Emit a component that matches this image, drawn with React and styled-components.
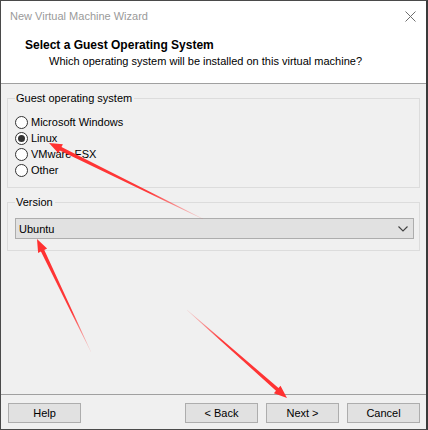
import { createGlobalStyle, styled } from "styled-components"

const GlobalStyle = createGlobalStyle`
    html, body {
        margin: 0;
        padding: 0;
        background: #2b2b2b;
    }
    * { box-sizing: border-box; }
`

const arrows = [
    { id: 'a1', tail: [203, 219], tip: [49, 143] },
    { id: 'a2', tail: [91, 352], tip: [37, 239] },
    { id: 'a3', tail: [187, 310], tip: [287, 398] },
]

function arrowPoints({ tail, tip }) {
    const dx = tip[0] - tail[0]
    const dy = tip[1] - tail[1]
    const len = Math.hypot(dx, dy)
    const ux = dx / len, uy = dy / len
    const nx = -uy, ny = ux
    const head = 13, headW = 5, shaftW = 1.9, tailW = 0.2
    const bx = tip[0] - ux * head, by = tip[1] - uy * head
    const p = (x, y) => `${x.toFixed(1)},${y.toFixed(1)}`
    return [
        p(tail[0] + nx * tailW, tail[1] + ny * tailW),
        p(bx + nx * shaftW, by + ny * shaftW),
        p(bx + nx * headW, by + ny * headW),
        p(tip[0], tip[1]),
        p(bx - nx * headW, by - ny * headW),
        p(bx - nx * shaftW, by - ny * shaftW),
        p(tail[0] - nx * tailW, tail[1] - ny * tailW),
    ].join(' ')
}

const osList = ['Microsoft Windows', 'Linux', 'VMware ESX', 'Other']

export default function App() {
    return (<>
        <GlobalStyle />
        <Styled.Window>
            <Styled.Top>
                <Styled.TitleBar>
                    <Styled.Title>New Virtual Machine Wizard</Styled.Title>
                    <Styled.Close aria-label="close">
                        <svg width="11" height="11" viewBox="0 0 11 11">
                            <path d="M0.5 0.5 L10.5 10.5 M10.5 0.5 L0.5 10.5" stroke="#6d6d6d" strokeWidth="1" fill="none" />
                        </svg>
                    </Styled.Close>
                </Styled.TitleBar>
                <Styled.Heading>Select a Guest Operating System</Styled.Heading>
                <Styled.Sub>Which operating system will be installed on this virtual machine?</Styled.Sub>
            </Styled.Top>

            <Styled.Body>
                <Styled.Group>
                    <Styled.Legend>Guest operating system</Styled.Legend>
                    <Styled.RadioList>
                        {osList.map((os) => (
                            <Styled.RadioRow key={os}>
                                <Styled.Radio $checked={os === 'Linux'} />
                                {os}
                            </Styled.RadioRow>
                        ))}
                    </Styled.RadioList>
                </Styled.Group>

                <Styled.Group $second>
                    <Styled.Legend>Version</Styled.Legend>
                    <Styled.Select>
                        <span>Ubuntu</span>
                        <svg width="10" height="6" viewBox="0 0 10 6">
                            <path d="M0.5 0.5 L5 5 L9.5 0.5" stroke="#404040" strokeWidth="1.1" fill="none" />
                        </svg>
                    </Styled.Select>
                </Styled.Group>
            </Styled.Body>

            <Styled.Footer>
                <Styled.Button>Help</Styled.Button>
                <Styled.Spacer />
                <Styled.Button>&lt; Back</Styled.Button>
                <Styled.Button>Next &gt;</Styled.Button>
                <Styled.Button>Cancel</Styled.Button>
            </Styled.Footer>

            <Styled.Overlay width="428" height="430" viewBox="0 0 428 430">
                <defs>
                    {arrows.map((a) => (
                        <linearGradient key={a.id} id={a.id} gradientUnits="userSpaceOnUse"
                            x1={a.tail[0]} y1={a.tail[1]} x2={a.tip[0]} y2={a.tip[1]}>
                            <stop offset="0" stopColor="#ff3030" stopOpacity="0.1" />
                            <stop offset="0.35" stopColor="#ff3030" stopOpacity="0.95" />
                            <stop offset="1" stopColor="#ff3030" stopOpacity="1" />
                        </linearGradient>
                    ))}
                </defs>
                {arrows.map((a) => (
                    <polygon key={a.id} points={arrowPoints(a)} fill={`url(#${a.id})`} />
                ))}
            </Styled.Overlay>
        </Styled.Window>
    </>)
}

const Styled = {
    Window: styled.div`
        position: relative;
        width: 428px;
        height: 430px;
        display: flex;
        flex-direction: column;
        background: #f0f0f0;
        border: 1px solid #4a4a4a;
        border-right: 2px solid #3a3a3a;
        font-family: "Liberation Sans", Arial, sans-serif;
        font-size: 11px;
        color: #000;
        overflow: hidden;
    `,
    Top: styled.div`
        height: 83px;
        background: #fff;
        border-bottom: 1px solid #a0a0a0;
        display: flex;
        flex-direction: column;
    `,
    TitleBar: styled.div`
        height: 30px;
        display: flex;
        align-items: center;
        justify-content: space-between;
        padding: 0 10px 0 9px;
    `,
    Title: styled.div`
        font-size: 11px;
        color: #9a9a9a;
    `,
    Close: styled.div`
        display: flex;
        align-items: center;
    `,
    Heading: styled.div`
        margin-top: 6px;
        padding-left: 24px;
        font-size: 12px;
        font-weight: bold;
        line-height: 16px;
    `,
    Sub: styled.div`
        padding-left: 48px;
        line-height: 16px;
    `,
    Body: styled.div`
        flex: 1;
        padding: 6px 6px 0 6px;
        display: flex;
        flex-direction: column;
        gap: 6px;
    `,
    Group: styled.fieldset`
        margin: 0;
        border: 1px solid #dcdcdc;
        padding: 8px 5px ${(p) => (p.$second ? '11px' : '9px')} 7px;
        min-width: 0;
    `,
    Legend: styled.legend`
        padding: 0 2px 0 1px;
        line-height: 16px;
    `,
    RadioList: styled.div`
        display: flex;
        flex-direction: column;
    `,
    RadioRow: styled.label`
        display: flex;
        align-items: center;
        gap: 3px;
        height: 16px;
        line-height: 16px;
    `,
    Radio: styled.span`
        width: 13px;
        height: 13px;
        border-radius: 50%;
        border: 1px solid #333;
        background: #fff;
        display: flex;
        align-items: center;
        justify-content: center;
        flex: none;
        &::after {
            content: '';
            width: 7px;
            height: 7px;
            border-radius: 50%;
            background: #333;
            display: ${(p) => (p.$checked ? 'block' : 'none')};
        }
    `,
    Select: styled.div`
        height: 21px;
        background: #e1e1e1;
        border: 1px solid #adadad;
        display: flex;
        align-items: center;
        justify-content: space-between;
        padding: 0 5px 0 3px;
        color: #000;
    `,
    Footer: styled.div`
        height: 35px;
        border-top: 1px solid #a0a0a0;
        display: flex;
        align-items: flex-start;
        gap: 8px;
        padding: 8px 6px 0 7px;
    `,
    Spacer: styled.div`
        flex: 1;
    `,
    Button: styled.button`
        width: 73px;
        height: 20px;
        background: #e1e1e1;
        border: 1px solid #adadad;
        font-family: inherit;
        font-size: 11px;
        color: #000;
        padding: 0;
    `,
    Overlay: styled.svg`
        position: absolute;
        left: -1px;
        top: -1px;
        pointer-events: none;
    `,
}
